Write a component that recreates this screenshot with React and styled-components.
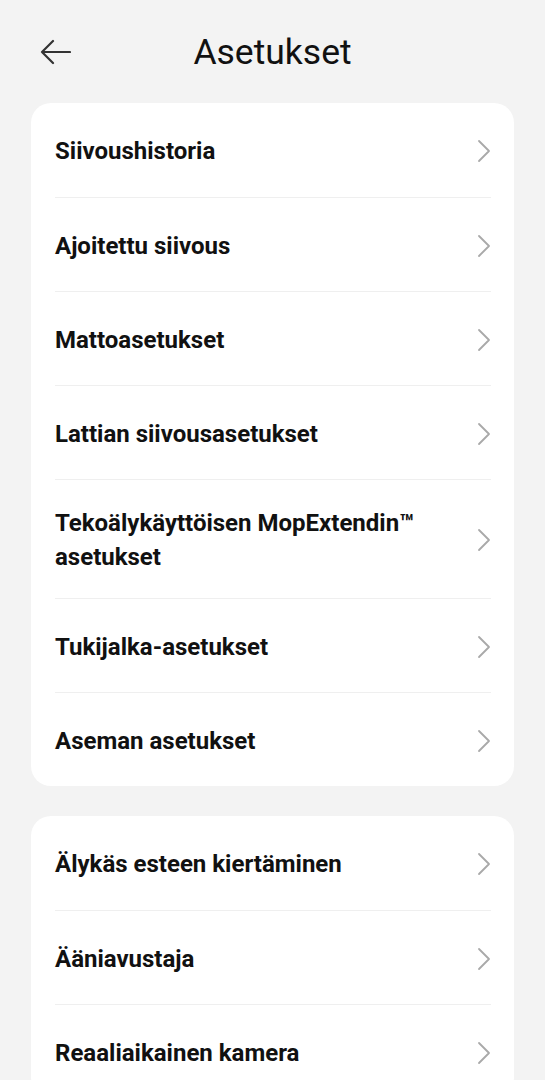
import React from 'react';
import styled, { createGlobalStyle } from 'styled-components';

const Global = createGlobalStyle`
  html, body {
    margin: 0;
    padding: 0;
    background: #f3f3f3;
  }
  body {
    font-family: Roboto, "Noto Sans", sans-serif;
    -webkit-font-smoothing: antialiased;
  }
`;

const Page = styled.div`
  width: 545px;
  min-height: 1080px;
  background: #f3f3f3;
  overflow: hidden;
`;

const Header = styled.header`
  position: relative;
  height: 103px;
  display: flex;
  align-items: flex-start;
  justify-content: center;
`;

const BackButton = styled.button`
  position: absolute;
  left: 40px;
  top: 39px;
  width: 31px;
  height: 26px;
  padding: 0;
  border: 0;
  background: none;
  display: flex;
`;

const Title = styled.h1`
  margin: 30px 0 0;
  font-size: 35.5px;
  line-height: 44px;
  font-weight: 400;
  color: #111;
`;

const Card = styled.section`
  margin: 0 31px 30px;
  background: #fff;
  border-radius: 20px;
  padding: 0 23px 0 24px;
`;

const Row = styled.div`
  display: flex;
  align-items: center;
  justify-content: space-between;
  min-height: ${p => (p.tall ? 119 : 94)}px;
  padding-top: 2px;
  box-sizing: border-box;
  border-top: ${p => (p.first ? 'none' : '1px solid #efefef')};
`;

const Label = styled.span`
  font-size: 24px;
  line-height: 34px;
  font-weight: 700;
  color: #111;
  max-width: 385px;
`;

const Chevron = () => (
  <svg width="14" height="24" viewBox="0 0 14 24" fill="none">
    <path d="M2 2l10 10L2 22" stroke="#a9a9a9" strokeWidth="1.8" strokeLinecap="round" strokeLinejoin="round" />
  </svg>
);

const BackArrow = () => (
  <svg width="31" height="26" viewBox="0 0 31 26" fill="none">
    <path d="M30 13H2M13 2L2 13l11 11" stroke="#333" strokeWidth="2.2" strokeLinecap="round" strokeLinejoin="round" />
  </svg>
);

const groups = [
  [
    { label: 'Siivoushistoria' },
    { label: 'Ajoitettu siivous' },
    { label: 'Mattoasetukset' },
    { label: 'Lattian siivousasetukset' },
    { label: 'Tekoälykäyttöisen MopExtendin™ asetukset', tall: true },
    { label: 'Tukijalka-asetukset' },
    { label: 'Aseman asetukset' },
  ],
  [
    { label: 'Älykäs esteen kiertäminen' },
    { label: 'Ääniavustaja' },
    { label: 'Reaaliaikainen kamera' },
  ],
];

export default function App() {
  return (
    <Page>
      <Global />
      <Header>
        <BackButton aria-label="Takaisin">
          <BackArrow />
        </BackButton>
        <Title>Asetukset</Title>
      </Header>
      {groups.map((items, gi) => (
        <Card key={gi}>
          {items.map((item, i) => (
            <Row key={item.label} first={i === 0} tall={item.tall}>
              <Label>{item.label}</Label>
              <Chevron />
            </Row>
          ))}
        </Card>
      ))}
    </Page>
  );
}
